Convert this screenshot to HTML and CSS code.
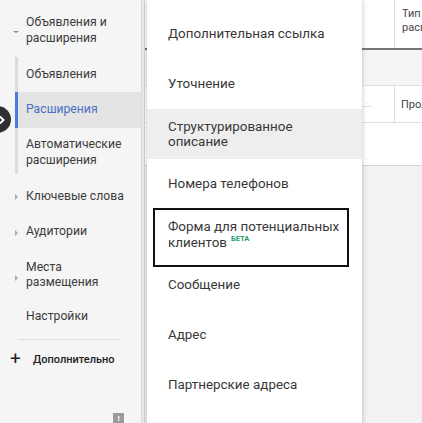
FILE: index.html
```html
<!DOCTYPE html>
<html lang="ru">
<head>
<meta charset="utf-8">
<title>Расширения</title>
<link rel="stylesheet" href="styles.css">
</head>
<body>
<div class="app">
  <nav class="sidebar">
    <div class="nav-item head">
      <span class="caret down"></span>
      <span class="label">Объявления и<br>расширения</span>
    </div>
    <div class="sub">
      <div class="sub-item h35">Объявления</div>
      <div class="sub-item active h36">Расширения</div>
      <div class="sub-item h44">Автоматические<br>расширения</div>
    </div>
    <div class="nav-item row kw"><span class="caret right"></span><span class="label">Ключевые слова</span></div>
    <div class="nav-item row aud"><span class="caret right"></span><span class="label">Аудитории</span></div>
    <div class="nav-item row places"><span class="caret right"></span><span class="label">Места<br>размещения</span></div>
    <div class="nav-item row settings"><span class="label">Настройки</span></div>
    <div class="sep"></div>
    <div class="more"><span class="plus">+</span><span class="more-label">Дополнительно</span></div>
    <div class="feedback">!</div>
  </nav>
  <div class="gutter"></div>
  <main class="main">
    <div class="trow thead">
      <div class="c1"></div>
      <div class="c2">Тип<br>расширения</div>
    </div>
    <div class="trow tgray"></div>
    <div class="trow tdata">
      <div class="c1"><span class="trunc">...:...</span></div>
      <div class="c2">Пролистывание</div>
    </div>
    <div class="trow tblank"></div>
    <div class="rest"></div>
  </main>
  <div class="toggle">
    <svg width="10" height="10" viewBox="0 0 10 10"><path d="M3 1.5 L6.5 5 L3 8.5" fill="none" stroke="#fff" stroke-width="2"/></svg>
  </div>
  <div class="menu">
    <div class="mi"><span>Дополнительная ссылка</span></div>
    <div class="mi"><span>Уточнение</span></div>
    <div class="mi hover"><span>Структурированное<br>описание</span></div>
    <div class="mi"><span>Номера телефонов</span></div>
    <div class="mi form"><span>Форма для потенциальных<br>клиентов<sup class="beta">БЕТА</sup></span></div>
    <div class="mi"><span>Сообщение</span></div>
    <div class="mi"><span>Адрес</span></div>
    <div class="mi"><span>Партнерские адреса</span></div>
    <div class="mark"></div>
  </div>
</div>
</body>
</html>
```

FILE: styles.css
```css
* { box-sizing: border-box; }
html, body {
  margin: 0;
  padding: 0;
  width: 422px;
  height: 423px;
  overflow: hidden;
  font-family: Roboto, "Liberation Sans", Arial, sans-serif;
  color: #3c3c3c;
}
.app {
  position: relative;
  display: flex;
  width: 422px;
  height: 423px;
  overflow: hidden;
}
.sidebar {
  position: relative;
  width: 142px;
  flex: none;
  background: #f5f5f5;
  border-right: 1px solid #dadada;
  font-size: 12.2px;
}
.nav-item {
  display: flex;
  align-items: center;
  position: relative;
  padding-left: 26px;
}
.label { line-height: 15.5px; }
.head { height: 57px; padding-top: 4px; }
.caret {
  position: absolute;
  width: 0;
  height: 0;
}
.caret.down {
  left: 13px;
  top: 31px;
  border-left: 3px solid transparent;
  border-right: 3px solid transparent;
  border-top: 2px solid #888;
}
.caret.right {
  left: 15px;
  border-top: 3px solid transparent;
  border-bottom: 3px solid transparent;
  border-left: 3px solid #aaa;
}
.sub {
  margin-left: 15px;
  border-left: 3px solid #dcdcdc;
}
.sub-item {
  display: flex;
  align-items: center;
  padding-left: 8px;
  line-height: 15.5px;
  margin-left: -3px;
  border-left: 3px solid transparent;
}
.h35 { height: 35px; }
.h36 { height: 36px; }
.h44 { height: 46px; padding-top: 3px; }
.sub-item.active {
  border-left-color: #4a7ede;
  background: #e4e4e4;
  color: #4a6fc4;
}
.kw { height: 38px; margin-top: 4px; }
.kw .caret { top: 16px; }
.aud { height: 32px; }
.aud .caret { top: 14px; }
.places { height: 54px; }
.places .caret { top: 27px; }
.settings { height: 30px; }
.sep {
  margin: 7px 22px 0 18px;
  border-top: 1px solid #dedede;
}
.more {
  display: flex;
  align-items: center;
  height: 38px;
  padding-left: 10px;
}
.plus {
  font-size: 19px;
  font-weight: 400;
  color: #222;
  width: 23px;
  line-height: 18px;
}
.more-label {
  font-size: 11px;
  font-weight: 500;
  color: #222;
}
.feedback {
  position: absolute;
  left: 113px;
  top: 413px;
  width: 11px;
  height: 11px;
  background: #9b9b9b;
  color: #fff;
  font-size: 8px;
  font-weight: bold;
  text-align: center;
  line-height: 11px;
}
.gutter {
  width: 3px;
  flex: none;
  background: #ececec;
  border-right: 1px solid #d5d5d5;
}
.main {
  flex: 1;
  display: flex;
  flex-direction: column;
  background: #fff;
  font-size: 11px;
  color: #444;
}
.trow {
  display: flex;
  flex: none;
}
.c1 { width: 249px; flex: none; position: relative; }
.c2 {
  flex: 1;
  border-left: 1px solid #e0e0e0;
  padding-left: 7px;
  white-space: nowrap;
  overflow: hidden;
}
.thead { height: 50px; border-bottom: 2px solid #777; }
.thead .c2 { padding-top: 7px; line-height: 14px; }
.tgray { height: 36px; background: #f5f5f5; border-bottom: 1px solid #e0e0e0; }
.tdata { height: 37px; border-bottom: 1px solid #e0e0e0; align-items: stretch; }
.tdata .c2 { display: flex; align-items: center; padding-left: 6px; }
.trunc {
  position: absolute;
  left: 216px;
  top: 14px;
  font-size: 8px;
  color: #bbb;
  letter-spacing: -0.5px;
}
.tblank { height: 43px; border-bottom: 1px solid #d6d6d6; }
.rest { flex: 1; background: #f2f2f2; }
.toggle {
  position: absolute;
  left: -16px;
  top: 106px;
  width: 27px;
  height: 27px;
  border-radius: 50%;
  background: #2f2f2f;
  display: flex;
  align-items: center;
  justify-content: flex-end;
  padding-right: 4px;
}
.menu {
  position: absolute;
  left: 147px;
  top: 0;
  width: 215px;
  height: 430px;
  background: #fff;
  box-shadow: 0 0 5px rgba(0,0,0,0.25);
  padding-top: 9px;
  font-size: 13.4px;
  color: #383838;
}
.mi {
  display: flex;
  align-items: center;
  min-height: 50px;
  padding: 0 21px;
  line-height: 15.5px;
}
.mi.hover { background: #eeeeee; }
.mi.form { min-height: 51px; }
.beta {
  font-size: 7.5px;
  font-weight: bold;
  color: #1e9e6a;
  margin-left: 4px;
  vertical-align: 6px;
  line-height: 0;
}
.mark {
  position: absolute;
  left: 6px;
  top: 208px;
  width: 196px;
  height: 59px;
  border: 2px solid #111;
}
```
